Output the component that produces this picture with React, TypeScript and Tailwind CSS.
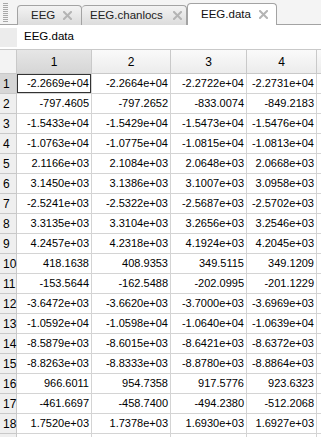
import React from "react";

const data: string[][] = [
  ["-2.2669e+04", "-2.2664e+04", "-2.2722e+04", "-2.2731e+04"],
  ["-797.4605", "-797.2652", "-833.0074", "-849.2183"],
  ["-1.5433e+04", "-1.5429e+04", "-1.5473e+04", "-1.5476e+04"],
  ["-1.0763e+04", "-1.0775e+04", "-1.0815e+04", "-1.0813e+04"],
  ["2.1166e+03", "2.1084e+03", "2.0648e+03", "2.0668e+03"],
  ["3.1450e+03", "3.1386e+03", "3.1007e+03", "3.0958e+03"],
  ["-2.5241e+03", "-2.5322e+03", "-2.5687e+03", "-2.5702e+03"],
  ["3.3135e+03", "3.3104e+03", "3.2656e+03", "3.2546e+03"],
  ["4.2457e+03", "4.2318e+03", "4.1924e+03", "4.2045e+03"],
  ["418.1638", "408.9353", "349.5115", "349.1209"],
  ["-153.5644", "-162.5488", "-202.0995", "-201.1229"],
  ["-3.6472e+03", "-3.6620e+03", "-3.7000e+03", "-3.6969e+03"],
  ["-1.0592e+04", "-1.0598e+04", "-1.0640e+04", "-1.0639e+04"],
  ["-8.5879e+03", "-8.6015e+03", "-8.6421e+03", "-8.6372e+03"],
  ["-8.8263e+03", "-8.8333e+03", "-8.8780e+03", "-8.8864e+03"],
  ["966.6011", "954.7358", "917.5776", "923.6323"],
  ["-461.6697", "-458.7400", "-494.2380", "-512.2068"],
  ["1.7520e+03", "1.7378e+03", "1.6930e+03", "1.6927e+03"],
  ["", "", "", ""],
];

function CloseX() {
  return (
    <svg width="9" height="9" viewBox="0 0 9 9" className="shrink-0">
      <path d="M1 1 L8 8 M8 1 L1 8" stroke="#b4b4b4" strokeWidth="2" strokeLinecap="square" />
    </svg>
  );
}

function Grip() {
  const dots = [];
  for (let i = 0; i < 10; i++) {
    dots.push(<rect key={i} x="0" y={i * 2} width="5" height="1" fill="#a8a8a8" />);
  }
  return (
    <svg width="5" height="19" viewBox="0 0 5 19">
      {dots}
    </svg>
  );
}

export default function App() {
  return (
    <div className="w-[321px] h-[437px] overflow-hidden bg-white text-[11px] text-black font-['Liberation_Sans',Arial,sans-serif] flex flex-col">
      {/* Tab bar */}
      <div className="h-[25px] shrink-0 flex items-end bg-[#f4f4f4] border-b border-[#a3a3a3]">
        <div className="w-[17px] h-full flex items-center pl-[3px]">
          <Grip />
        </div>
        <div className="w-[65px] h-[20px] -mb-px flex items-center pl-[13px] pr-[9px] rounded-t-[4px] border border-b-0 border-[#a3a3a3] bg-gradient-to-b from-[#f3f3f3] to-[#dcdcdc] text-[#222]">
          <span className="text-[11.5px]">EEG</span>
          <span className="ml-auto"><CloseX /></span>
        </div>
        <div className="w-[105px] h-[20px] -mb-px flex items-center pl-[8px] pr-[4px] rounded-t-[4px] border border-b-0 border-l-0 border-[#a3a3a3] bg-gradient-to-b from-[#f3f3f3] to-[#dcdcdc] text-[#222]">
          <span className="text-[11.5px]">EEG.chanlocs</span>
          <span className="ml-auto"><CloseX /></span>
        </div>
        <div className="w-[90px] h-[22px] -mb-px flex items-center pl-[13px] pr-[8px] rounded-t-[4px] border border-b-0 border-[#a3a3a3] bg-white text-[#111]">
          <span className="text-[11.5px]">EEG.data</span>
          <span className="ml-auto"><CloseX /></span>
        </div>
      </div>

      {/* Variable label row */}
      <div className="h-[24px] shrink-0 flex items-center">
        <div className="w-[17px] h-[19px] bg-[#ececec]" />
        <span className="ml-[7px] text-[11.5px]">EEG.data</span>
      </div>

      {/* Table */}
      <div className="grid grid-cols-[17px_75px_79px_76px_70px_1fr] border-t border-[#c9c9c9]">
        {/* header */}
        <div className="h-[24px] border-r border-b border-[#c9c9c9] bg-[#f3f3f3]" />
        {["1", "2", "3", "4"].map((h, i) => (
          <div
            key={h}
            className={
              i === 0
                ? "h-[24px] flex items-center justify-center text-[12px] border-r border-b border-[#c9c9c9] bg-gradient-to-b from-[#e6e6e6] to-[#d6d6d6]"
                : "h-[24px] flex items-center justify-center text-[12px] border-r border-b border-[#c9c9c9] bg-gradient-to-b from-[#fafafa] to-[#ececec]"
            }
          >
            {h}
          </div>
        ))}
        <div className="h-[24px] border-b border-[#c9c9c9] bg-gradient-to-b from-[#fafafa] to-[#ececec]" />

        {data.map((row, r) => (
          <React.Fragment key={r}>
            <div
              className={
                r === 0
                  ? "h-[20px] flex items-center pl-[3px] text-[12px] border-r border-b border-[#c9c9c9] bg-[#d6d6d6]"
                  : "h-[20px] flex items-center pl-[3px] text-[12px] border-r border-b border-[#c9c9c9] bg-[#efefef]"
              }
            >
              {r < 18 ? r + 1 : ""}
            </div>
            {row.map((v, c) => (
              <div
                key={c}
                className={
                  r === 0 && c === 0
                    ? "h-[20px] flex items-center justify-end pr-[2px] text-[11px] border-r border-b border-[#d4d4d4] shadow-[inset_0_0_0_1px_#333]"
                    : "h-[20px] flex items-center justify-end pr-[2px] text-[11px] border-r border-b border-[#d4d4d4]"
                }
              >
                {v}
              </div>
            ))}
            <div className="h-[20px] border-b border-[#d4d4d4]" />
          </React.Fragment>
        ))}
      </div>
    </div>
  );
}
